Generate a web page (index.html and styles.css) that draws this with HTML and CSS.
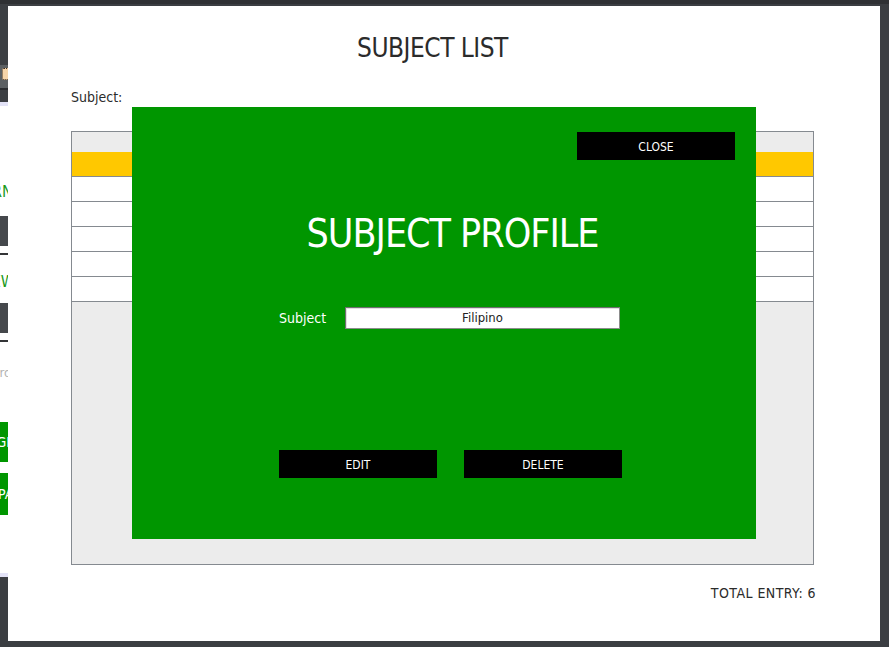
FILE: index.html
```html
<!DOCTYPE html>
<html lang="en">
<head>
<meta charset="utf-8">
<title>Subject List</title>
<link rel="stylesheet" href="styles.css">
</head>
<body>
<div class="app">
  <div class="app-titlebar"></div>
  <aside class="app-side">
    <div class="side-dark"></div>
    <div class="side-toolbar"><span class="tool-icon"></span></div>
    <div class="side-line"></div>
    <div class="side-dark2"></div>
    <div class="side-lav"></div>
    <div class="side-body">
      <div class="frag frag-green frag-learn">LEARN</div>
      <div class="side-input"></div>
      <div class="side-rule"></div>
      <div class="frag frag-green frag-new">NEW</div>
      <div class="side-input side-input-2"></div>
      <div class="side-rule"></div>
      <div class="frag frag-gray">Password</div>
      <div class="side-btn side-btn-1"><span>LOGIN</span></div>
      <div class="side-btn side-btn-2"><span>SPARE</span></div>
    </div>
    <div class="side-lav"></div>
  </aside>
</div>

<div class="window">
  <h1 class="win-title">SUBJECT LIST</h1>
  <div class="filter-label">Subject:</div>
  <div class="grid">
    <div class="grid-head"></div>
    <div class="grid-row selected"></div>
    <div class="grid-row"></div>
    <div class="grid-row"></div>
    <div class="grid-row"></div>
    <div class="grid-row"></div>
    <div class="grid-row"></div>
  </div>
  <div class="total">TOTAL ENTRY: 6</div>

  <div class="modal">
    <div class="modal-top">
      <button class="btn">CLOSE</button>
    </div>
    <h2 class="modal-title">SUBJECT PROFILE</h2>
    <div class="field">
      <label class="field-label">Subject</label>
      <div class="field-input">Filipino</div>
    </div>
    <div class="modal-actions">
      <button class="btn">EDIT</button>
      <button class="btn">DELETE</button>
    </div>
  </div>
</div>
</body>
</html>
```

FILE: styles.css
```css
* { box-sizing: border-box; }

html, body {
  margin: 0;
  padding: 0;
  width: 889px;
  height: 647px;
  overflow: hidden;
}

body {
  background: #3b3e42;
  font-family: "DejaVu Sans Condensed", "DejaVu Sans", sans-serif;
  font-stretch: condensed;
  position: relative;
}

/* underlying application (mostly hidden) */
.app-titlebar {
  height: 4px;
  background: #2f3134;
}

.app-side {
  width: 40px;
  display: flex;
  flex-direction: column;
  overflow: hidden;
}

.side-dark { height: 61px; background: #3c3f43; }
.side-toolbar {
  height: 23px;
  background: #5b5f62;
  padding: 3px 0 0 2px;
}
.tool-icon {
  display: block;
  width: 10px;
  height: 12px;
  background: #f6d5aa;
  border: 1px dotted #3a2a1a;
  border-radius: 2px;
}
.side-line { height: 2px; background: #2a2c2f; }
.side-dark2 { height: 12px; background: #3c3f43; }
.side-lav { height: 4px; background: #e3e3f7; }

.side-body {
  height: 467px;
  background: #ffffff;
  display: flex;
  flex-direction: column;
  padding-top: 77px;
}

.frag {
  white-space: nowrap;
  overflow: hidden;
  line-height: 18px;
  height: 18px;
}
.frag-green { color: #1b9a1b; font-size: 16px; }
.frag-learn { text-indent: -35px; }
.frag-new { text-indent: -19px; margin-top: 18px; }
.frag-gray { color: #b3b3b3; font-size: 13px; text-indent: -43px; margin-top: 22px; }

.side-input {
  height: 30px;
  background: #45484c;
  margin-top: 15px;
}
.side-input-2 { margin-top: 12px; }
.side-rule {
  height: 2px;
  background: #333537;
  margin-top: 7px;
}

.side-btn {
  height: 40px;
  background: #009600;
  color: #ffffff;
  font-size: 14px;
  white-space: nowrap;
  overflow: hidden;
  display: flex;
  align-items: center;
}
.side-btn-1 { margin-top: 40px; text-indent: -20px; }
.side-btn-2 { margin-top: 11px; height: 42px; text-indent: -10px; }

/* dialog window lying over the application */
.window {
  position: absolute;
  left: 8px;
  top: 6px;
  width: 872px;
  height: 635px;
  background: #ffffff;
  padding: 26px 66px 0 63px;
  display: flex;
  flex-direction: column;
  color: #2b2b2b;
}

.win-title {
  margin: 0;
  font-weight: normal;
  font-size: 26px;
  letter-spacing: -0.5px;
  line-height: 32px;
  text-align: center;
  padding-right: 20px;
  color: #2b2b2b;
}

.filter-label {
  margin-top: 24px;
  font-size: 14px;
  line-height: 18px;
  color: #2b2b2b;
}

.grid {
  margin-top: 25px;
  height: 434px;
  border: 1px solid #858a90;
  background: #ececec;
  display: flex;
  flex-direction: column;
}

.grid-head {
  height: 20px;
  background: #ececec;
}

.grid-row {
  height: 25px;
  background: #ffffff;
  border-bottom: 1px solid #858a90;
}
.grid-row.selected { background: #ffc800; }

.total {
  margin-top: 19px;
  font-size: 14px;
  letter-spacing: 0.45px;
  line-height: 18px;
  text-align: right;
  margin-right: -2px;
  color: #2b2b2b;
}

/* green profile modal */
.modal {
  position: absolute;
  left: 124px;
  top: 101px;
  width: 624px;
  height: 432px;
  background: #009600;
  display: flex;
  flex-direction: column;
  color: #ffffff;
}

.modal-top {
  display: flex;
  justify-content: flex-end;
  padding: 25px 21px 0 0;
}

.btn {
  width: 158px;
  height: 28px;
  background: #000000;
  color: #ffffff;
  border: none;
  padding: 1px 0 0;
  font-family: inherit;
  font-stretch: condensed;
  font-size: 12px;
  cursor: pointer;
}

.modal-title {
  margin: 50px 0 0;
  font-weight: normal;
  font-size: 39px;
  letter-spacing: -1px;
  line-height: 48px;
  text-align: center;
  padding-left: 17px;
}

.field {
  margin-top: 49px;
  padding-left: 147px;
  display: flex;
  align-items: center;
  gap: 18px;
}

.field-label {
  font-size: 14px;
  line-height: 18px;
  width: 48px;
}

.field-input {
  width: 275px;
  height: 22px;
  background: #ffffff;
  border: 1px solid #6f6f6f;
  border-right-color: #8c8c8c;
  border-bottom-color: #8c8c8c;
  box-shadow: inset 1px 1px 0 #e0e0e0;
  color: #222222;
  font-size: 13px;
  line-height: 20px;
  text-align: center;
}

.modal-actions {
  margin-top: 121px;
  padding-left: 147px;
  display: flex;
  gap: 27px;
}
```
